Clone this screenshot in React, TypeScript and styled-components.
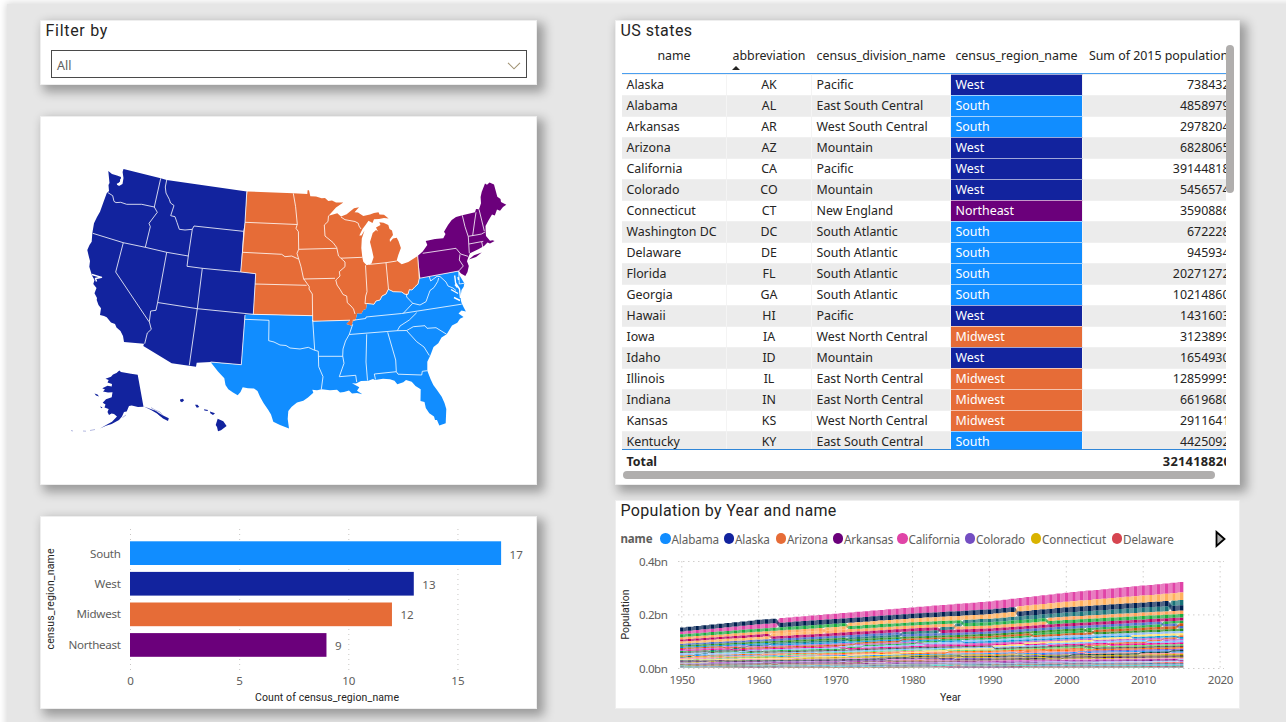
import React from "react";
import styled, { createGlobalStyle } from "styled-components";

const SANS = '"Noto Sans", "Open Sans", sans-serif';
const DIN = 'Roboto, "Liberation Sans", sans-serif';

const REGION = {
  South: "#118DFF",
  West: "#12239E",
  Midwest: "#E66C37",
  Northeast: "#6B007B",
} as const;
type Region = keyof typeof REGION;

const GlobalStyle = createGlobalStyle`
  * { box-sizing: border-box; }
  body { margin: 0; background: #fff; font-family: ${SANS}; color: #252423; overflow: hidden; }
`;

const Page = styled.div`
  width: 1286px;
  height: 722px;
  padding: 4px 0 0 7px;
  overflow: hidden;
`;

const Canvas = styled.main`
  height: 730px;
  width: 1290px;
  padding: 16px 0 0 33px;
  display: flex;
  gap: 78px;
  background: #e6e6e6;
  box-shadow: 0 0 7px 1px rgba(0, 0, 0, 0.16);
`;

const Column = styled.div<{ $width: number }>`
  width: ${(p) => p.$width}px;
  display: flex;
  flex-direction: column;
`;

const Card = styled.section<{ $height: number; $gap?: number; $flat?: boolean }>`
  height: ${(p) => p.$height}px;
  margin-bottom: ${(p) => p.$gap ?? 0}px;
  flex: none;
  background: #fff;
  border: 1px solid #eee;
  overflow: hidden;
  box-shadow: ${(p) => (p.$flat ? "none" : "5px 5px 10px 2px rgba(0, 0, 0, 0.33)")};
`;

const Title = styled.h2<{ $spacing: number }>`
  margin: 0;
  padding-left: 4.5px;
  height: 21px;
  font: 400 16px/20px ${DIN};
  letter-spacing: ${(p) => p.$spacing}px;
  white-space: nowrap;
`;

const Select = styled.div`
  margin: 8px 9px 0 10px;
  height: 28px;
  padding: 3px 5px 0;
  border: 1px solid #4a4a4a;
  display: flex;
  justify-content: space-between;
  align-items: center;
  font-size: 12.5px;
  color: #605e5c;
`;

const Fill = styled.svg`
  display: block;
  margin: -1px;
`;

/* ---------- table ---------- */

const TableArea = styled.div`
  display: flex;
  padding: 3px 0 0 6px;
`;

const TableView = styled.div`
  width: 604px;
  height: 427px;
  overflow: hidden;
  font-size: 12.4px;
`;

const columns = "105px 85px 139px 132px 152px";

const HeadRow = styled.div`
  display: grid;
  grid-template-columns: ${columns};
  width: 613px;
  height: 29px;
  border-bottom: 1px solid #4a9ff0;
`;

const HeadCell = styled.div`
  padding-right: 1px;
  text-align: center;
  line-height: 22px;
  white-space: nowrap;
`;

const SortMark = styled.div`
  width: 0;
  margin: -1px 0 0 5px;
  border: 4px solid transparent;
  border-top: 0;
  border-bottom-color: #252423;
`;

const Body = styled.div`
  height: 375px;
  overflow: hidden;
`;

const Row = styled.div<{ $odd: boolean }>`
  display: grid;
  grid-template-columns: ${columns};
  width: 613px;
  height: 21px;
  background: ${(p) => (p.$odd ? "#ececec" : "#fff")};
`;

const Cell = styled.div<{ $align?: string; $fill?: string }>`
  padding: 0 4.5px;
  line-height: 20px;
  text-align: ${(p) => p.$align ?? "left"};
  white-space: nowrap;
  color: ${(p) => (p.$fill ? "#fff" : "inherit")};
  background: ${(p) => p.$fill ?? "transparent"};
  border-right: 1px solid #f4f4f4;
  border-top: 1px solid ${(p) => (p.$fill ? "rgba(255,255,255,.6)" : "#f0f0f0")};
`;

const TotalRow = styled.div`
  width: 613px;
  height: 23px;
  display: flex;
  justify-content: space-between;
  padding: 0 4px 0 4.5px;
  border-top: 1px solid #2f86d8;
  font-weight: 700;
  line-height: 23px;
`;

const TotalValue = styled.span`
  font-size: 12.8px;
  letter-spacing: 0.25px;
`;

const VScroll = styled.div`
  width: 8px;
  height: 148px;
  border-radius: 4px;
  background: #b0aead;
`;

const HScroll = styled.div`
  width: 592px;
  height: 8px;
  margin-left: 7px;
  margin-top: -1px;
  border-radius: 4px;
  background: #b0aead;
`;

const states: [string, string, string, Region, string][] = [
  ["Alaska", "AK", "Pacific", "West", "738432"],
  ["Alabama", "AL", "East South Central", "South", "4858979"],
  ["Arkansas", "AR", "West South Central", "South", "2978204"],
  ["Arizona", "AZ", "Mountain", "West", "6828065"],
  ["California", "CA", "Pacific", "West", "39144818"],
  ["Colorado", "CO", "Mountain", "West", "5456574"],
  ["Connecticut", "CT", "New England", "Northeast", "3590886"],
  ["Washington DC", "DC", "South Atlantic", "South", "672228"],
  ["Delaware", "DE", "South Atlantic", "South", "945934"],
  ["Florida", "FL", "South Atlantic", "South", "20271272"],
  ["Georgia", "GA", "South Atlantic", "South", "10214860"],
  ["Hawaii", "HI", "Pacific", "West", "1431603"],
  ["Iowa", "IA", "West North Central", "Midwest", "3123899"],
  ["Idaho", "ID", "Mountain", "West", "1654930"],
  ["Illinois", "IL", "East North Central", "Midwest", "12859995"],
  ["Indiana", "IN", "East North Central", "Midwest", "6619680"],
  ["Kansas", "KS", "West North Central", "Midwest", "2911641"],
  ["Kentucky", "KY", "East South Central", "South", "4425092"],
];

function StatesTable() {
  return (
    <>
      <TableArea>
        <TableView>
          <HeadRow>
            <HeadCell>name</HeadCell>
            <HeadCell>
              abbreviation
              <SortMark />
            </HeadCell>
            <HeadCell>census_division_name</HeadCell>
            <HeadCell>census_region_name</HeadCell>
            <HeadCell>Sum of 2015 population</HeadCell>
          </HeadRow>
          <Body>
            {states.map(([name, abbr, division, region, pop], i) => (
              <Row key={abbr} $odd={i % 2 === 1}>
                <Cell>{name}</Cell>
                <Cell $align="center">{abbr}</Cell>
                <Cell>{division}</Cell>
                <Cell $fill={REGION[region]}>{region}</Cell>
                <Cell $align="right">{pop}</Cell>
              </Row>
            ))}
          </Body>
          <TotalRow>
            <span>Total</span>
            <TotalValue>321418820</TotalValue>
          </TotalRow>
        </TableView>
        <VScroll />
      </TableArea>
      <HScroll />
    </>
  );
}

/* ---------- map ---------- */

const WEST =
  "M108.3 171L112 174L117 175.5L121 177L120.5 181L117 184.5L119 186L122.5 184L123.5 178L122.6 172L123.5 169L160.7 178.3L166.7 180L246.8 191.4L245 222.3L243.3 231.3L242 252.3L240.7 272L255.7 273.7L253.3 314.3L245 314.5L241.3 364.7L210.7 362L196.7 362.7L196 366.7L171.7 363.3L143.3 346L144 343.7L124 342L123 336L120.5 331L116.5 327.5L115 324L111 322.5L106.7 317.3L104 316L100 315L101 308.3L98.5 305L96.7 300L97 298L94.5 293.3L96.5 288L93.3 284L94.5 280L92 275.5L89.3 266.7L90 261L88.7 256L87.3 250L89.5 245L91.7 241.7L92.3 233.3L94 223.3L97 217L100 211.7L103.5 202L106.7 193.3L109 191L108.5 185L109.5 183Z";
const ALASKA =
  "M119.3 370.6L121 372L126.7 373L131 373.8L137.7 374.7L143.5 406.7L138 407L131.7 405.5L129 406L126.7 411.5L124 412L122 416.5L119 420L111.7 424L106 425.8L100 428.5L107 424.4L112 421.8L117 416.5L114 414L111.5 413.5L109 415L107.5 412L108.7 409L104.5 407.5L105.5 404.5L102.7 402.7L106 399.3L111.7 397.3L112.5 392.3L108 392.5L103 391.5L105 389.5L102.3 388.2L107.5 385.8L111.7 386.5L112 384L107.5 382.5L108.7 380L105.5 378.7L111 376.8L113 374.6L116.5 373Z M144 406.5L150 408.8L156 411L162 415L168.8 418.3L168 421L163 418.5L157 413.5L151 410Z M94.5 393.5l3 1l1.5 2l-3 -1z M100 406.5l2.5 .7l-1 1z";
const HAWAII =
  "M180 399.5L183 398.8L184 400.5L182 402.2L180.2 401.2Z M195 404.7L197.5 404.8L199.3 407L196.8 407.8Z M204 409.2L208 410L207.5 411L204.4 410.4Z M210 411.5L215 413.2L213 415L210.3 413.2Z M217.7 418.8L223.3 421.3L226.6 426L221 430.2L218 431.3L217 427L215.7 425Z";
const MIDWEST =
  "M247.3 191.4L293.3 193.3L307.3 194L307.6 190.3L309 190.3L310.3 196.3L316 196.5L321.7 198.3L325 198L328.3 201L332 200.5L336 202.4L343.3 202.4L336 207.5L328.6 215.7L333 214.5L337.3 213.2L341 216.6L346.7 214.3L350 211.5L354 208.2L359 207.3L354.5 212.3L358 212.5L363.3 216L370 214.4L374 213L378.5 212.3L379.5 214.6L384 214.7L388.6 218.4L384 218L379 219L374 219.3L372.5 223L368.5 220.8L365.5 225L362.5 229L359.3 235.5L361.5 235.5L364.5 230.5L361.8 238.5L361.3 248L362.3 257.3L363.3 261.7L366.7 265.3L371.5 263.5L373.6 257.3L372 250L370 242L372.7 233L376 230L378 231.5L376 227.5L380.5 225L379.3 222.3L383.5 222.8L388.3 225L389.5 229L392 230.5L393 235L389.7 239.5L390 242L393 238.5L396.7 237.7L398.5 241L400.9 248L398.3 255L396.7 260.5L401.7 264.3L408.3 261.9L417.7 256L419.3 270L419.3 278.3L418 284L415 286.7L412 290L409.3 289.7L408 294.3L405 294.3L401.7 292L393.3 291.7L388.3 289.3L386 294L382 296L380 300L376 301L374 304.3L367 303.5L366 309L363.3 310L361.5 313.5L357.3 313.3L355.5 320L352.6 321.5L351.7 325.7L346.5 324L350 320.2L312.7 321.3L312.7 315.7L253.3 314.3L255.7 273.7L240.7 272Z";
const NORTHEAST =
  "M481.7 192L485 183.5L487 184.8L489.5 182.6L494 184.6L497.3 196.7L500.5 199L501 202L506.3 204.7L503 207L500 210.7L497 209.5L494.8 215.6L492 214.5L488.3 220.7L485.5 226L485.7 231.7L486 236L490 240.7L492.5 240.3L494.6 241L490 243.6L487.5 242.5L484 246L478.3 249.2L470 253.3L468.4 257L467 261.3L468.8 266L467.5 272L465.3 276L461 273.5L458.8 271L420.3 278.3L417.7 256L422.7 251.5L427.3 245L425.7 241L435 239L443.3 238.3L445.5 234L444 231.7L448 225L451.7 220L456 217L462.3 215.3L475 212.3L476 209L479 209.3L481 203.3L480.6 197Z M468.8 259.6L474 255.2L481.7 252.5L476 257Z";
const SOUTH =
  "M245 314.3L253.3 314.5L312.7 315.7L312.7 321.3L350 320.2L346.5 324L351.7 325.7L352.6 321.5L355.5 320L357.3 313.3L361.5 313.5L363.3 310L366 309L367 303.5L374 304.3L376 301L380 300L382 296L386 294L388.3 289.3L393.3 291.7L401.7 292L405 294.3L408 294.3L409.3 289.7L412 290L415 286.7L418 284L419.3 278.3L458.7 271.3L459.3 275L464.3 283.3L463.7 286.7L461.5 290L460.5 297L461 301L461.7 303.3L463.5 307L465.9 311.5L461.5 310.5L458.5 313.5L463.5 317L460 318.7L457.3 322.8L452 325.5L446.7 334.3L441.5 337.5L438.3 343.3L433.5 347L430.5 355L427.3 361.7L427.3 370.7L430.5 379L433.3 385L437 390L441.7 396.7L444.5 403L446.3 409L445.7 423.3L439.3 425.5L437 420L435 420L434 416.5L429.3 413.3L425.8 408L424.5 402L420.5 401L420.7 389.3L415.5 386L411.7 381.7L406 380L403.3 382.2L397.3 384.2L394.5 380.7L390 379.3L383 378.7L375 380L373 379L368.3 380.7L361 381L356 383.5L352 383.3L359.3 387.3L357 390.7L362.3 394.3L357 393L352 393.6L349 390.5L344 391.9L340 392.5L337 389.7L330 390.2L321.7 389.3L317 390.3L312.3 389.7L313.3 392.7L308 397.5L303.3 400.7L297 402.5L291.7 406.7L288.3 411L287.7 419L289 428.6L280 425L273.3 421.7L271 414.5L268.3 410L263.5 403L260 396.7L257.5 391L254 388.5L248 388.3L242.7 387.3L240.5 392L237.7 395.3L233 392.5L228.3 389.3L225.5 385L224.3 378.3L218 371.5L210.7 362.3L241.3 364.7Z";

const BORDERS = [
  "M108 192.7L112.7 195.7L114 201.4L116 202.6L120.7 202.3L126.7 204.3L141.7 204.3L154.3 207",
  "M160.7 178.3L154.3 207L157.3 212.3L149 223.3L150.3 226.7L145.3 247.3",
  "M92.7 233.3L123.3 242.7L145.3 247.3L166.7 252.3L188.3 256",
  "M166.7 180L165.3 187L166 193L169.3 199.3L170.5 203L174 205.5L170.7 215.7L175 216.7L177 222.5L179.3 229.3L185 230L192.3 229.3L194 226L243.3 231.3",
  "M192.3 229.3L188.3 256L187 266.3L202.3 268.3L240.7 272L255.7 273.7L253.3 314.3",
  "M123.3 242.7L115.7 272L149 321.7",
  "M166.7 252.3L157.6 302.5L156 310.3L150.7 311L149.3 321.7L151.3 329.3L147.3 333L144.7 343.7",
  "M157.6 302.5L197.3 308.7L253.3 314.3L312.7 315.7",
  "M202.3 268.3L197.3 308.7L189.3 365.3",
  "M246.8 191.4L245 222.3L240.7 272",
  "M245 222.3L297.3 224.5",
  "M293.3 193.3L295.6 206.7L297.3 224.3L296 228.3L298.4 231.7L298.7 249.3L336.7 248.3",
  "M242.7 252.3L281.7 254.3L285 256.7L291.7 256L298.3 259",
  "M298.7 249.3L297 253.3L301 266.7L303.5 278.5L309.3 286.7L309 289L312.3 294L312.7 321.3",
  "M255 284L306.7 285.3M303.3 279L335 278.3",
  "M328.5 215.7L328 221.5L324.3 225L325 236L333 242.5L336.7 247.5L338.5 256L345 262L345 266.7L339.3 271.7L340 276L335.8 280L337 285L340 289.3L343 294.5L346.7 296L347.3 302.7L351 306L353.5 309L355 314",
  "M341 258.2L362.3 257.3M341 217L345 219.7L355 221.5L358.3 223.3L359 226L361 229",
  "M365.5 265.3L367 291.7L365.7 296L365 303.7M386 262.7L388.5 289.3M368.5 264.5L386 262.7L396.7 261",
  "M462.3 215.3L465 226.7L468.3 236.7L469.3 253.3M476 212.3L474.7 221L472.7 235.5M479 209.3L484.3 231",
  "M468.3 236.3L478 234.7L481.5 234L485 232M469 244L483.3 241.3M481.7 242L482.8 247.3",
  "M422.7 253.3L456 248.3L460.7 254L468 256.3M460 254.3L459.3 260L463.3 266L458.7 271",
  "M417.7 256L419.3 278.3L458.7 271L459.3 284L464 283.3",
  "M210.7 362L241.3 364.7L245 315M245 319.3L269 320.3L268.7 340.7L274 342L280 345L286 345.5L290 348L300 349L308.3 347.3L314 350L318.3 351.3",
  "M312.7 320L314.7 350M318.3 351.3L318.7 366.7L323 376.7L321.3 389.3M318.7 356.3L342.7 356.3M312.7 321.3L350 320.2",
  "M352.7 324.3L349.3 334.3L345.5 341L343 349L342.7 356L344 363.3L339.3 376.7L355.7 375.3L356.7 382",
  "M349.3 334.5L397.3 330.7L406.7 330.5L413.3 326.7L425 325.7L427 328.3L436 327.7L446.7 334.3",
  "M366.7 334.3L366 362L367.5 380.5M387.7 332.3L395.7 360L396.3 371.7L374.3 374L375.5 379.5M396.3 371.7L398 374.2L421.7 375L422.3 371.3L427.3 370.7",
  "M406.7 330.7L416.7 341.7L424 347L429.3 355.5M352.7 320.3L365.7 318.5L366 317L401.7 313.5L461.7 304.2",
  "M416.7 312.7L409.3 320L400 326L397.3 330.7M403.3 313.3L412.7 303.3L406.7 297L406.5 294",
  "M412.7 303.3L420 305L426 301.7L430 290.5L434 287.5L437.7 281.5L438.7 278M429.3 276.7L430.7 281L437 276.3L440 276.5L446 282L448 286L453 288L456 290.5",
  "M365 303.7L367 303.5L374 304.3L376 301L380 300L382 296L386 294L388.3 289.3L393.3 291.7L401.7 292L405 294.3L408 294.3L409.3 289.7L412 290L415 286.7L418 284L419.3 278.3",
].join("");

const WATER =
  "M92 274.5L101.5 277.3L95.5 278.5L96.5 281.5M117 184.5L120.5 183L121 179M454.7 275.5L455.6 283L459.5 289L460.5 298M455 284.5L457.5 287.5M451 289.5L458 293.5M454 297.5L460 300.5M458 277L458.6 280";

function UsMap() {
  return (
    <Fill width={497} height={369} viewBox="40 116 497 369">
      <path d={SOUTH} fill={REGION.South} />
      <path d={MIDWEST} fill={REGION.Midwest} />
      <path d={NORTHEAST} fill={REGION.Northeast} />
      <path d={WEST} fill={REGION.West} />
      <path d={ALASKA} fill={REGION.West} />
      <path d={HAWAII} fill={REGION.West} />
      <path
        d="M122.5 417.5l3.5 -2.5M90 430.5l5 -1M83 431l3 .2M71 430.5l2 .5M151 407.5l4 2.5l5 2l4 5l4 3M154 410l5 5l5 3"
        fill="none"
        stroke={REGION.West}
        strokeOpacity={0.4}
        strokeWidth={0.8}
      />
      <path d={BORDERS} fill="none" stroke="#fff" strokeOpacity={0.85} strokeWidth={0.95} strokeLinejoin="round" />
      <path d={WATER} fill="none" stroke="#fff" strokeWidth={1.4} strokeLinejoin="round" />
    </Fill>
  );
}

/* ---------- bar chart ---------- */

const counts: [Region, number, number][] = [
  ["South", 17, 31],
  ["West", 13, 26.5],
  ["Midwest", 12, 44.5],
  ["Northeast", 9, 52.5],
];

const Tick = styled.text`
  font-family: ${SANS};
  font-size: 11.6px;
  fill: #605e5c;
`;

const AxisTitle = styled.text`
  font-family: ${DIN};
  font-size: 10.5px;
  fill: #252423;
  text-anchor: middle;
`;

function RegionBars() {
  const unit = 21.83;
  return (
    <Fill width={497} height={193} viewBox="0 0 497 193">
      {[0, 5, 10, 15].map((v) => (
        <g key={v}>
          <line
            x1={90.5 + v * unit}
            x2={90.5 + v * unit}
            y1={13}
            y2={156}
            stroke="#c8c6c4"
            strokeDasharray="1 4"
          />
          <Tick x={90.5 + v * unit} y={168.5} textAnchor="middle">
            {v}
          </Tick>
        </g>
      ))}
      {counts.map(([region, n, width], i) => (
        <g key={region}>
          <rect x={90} y={25.3 + i * 30.6} width={n * unit} height={23.7} fill={REGION[region]} />
          <Tick x={81} y={41.5 + i * 30.4} textAnchor="end" textLength={width}>
            {region}
          </Tick>
          <Tick x={98.5 + n * unit} y={42.5 + i * 30.4}>
            {n}
          </Tick>
        </g>
      ))}
      <AxisTitle x={287} y={184.5} textLength={144}>
        Count of census_region_name
      </AxisTitle>
      <AxisTitle transform="translate(14 83) rotate(-90)" textLength={101}>
        census_region_name
      </AxisTitle>
    </Fill>
  );
}

/* ---------- ribbon chart ---------- */

const KNOTS = [1950, 1960, 1970, 1980, 1990, 2000, 2015];

// State populations in millions at each knot year.
const population: [string, number[]][] = [
  ["#118DFF", [3.06, 3.27, 3.44, 3.89, 4.04, 4.45, 4.86]],
  ["#12239E", [0.13, 0.23, 0.3, 0.4, 0.55, 0.63, 0.74]],
  ["#E66C37", [0.75, 1.3, 1.77, 2.72, 3.67, 5.13, 6.83]],
  ["#6B007B", [1.91, 1.79, 1.92, 2.29, 2.35, 2.67, 2.98]],
  ["#E044A7", [10.59, 16.3, 19.95, 23.67, 29.76, 33.87, 39.14]],
  ["#744EC2", [1.33, 1.75, 2.21, 2.89, 3.29, 4.3, 5.46]],
  ["#D9B300", [2.01, 2.54, 3.03, 3.11, 3.29, 3.41, 3.59]],
  ["#D64550", [0.32, 0.45, 0.55, 0.59, 0.67, 0.78, 0.95]],
  ["#197278", [2.77, 4.95, 6.79, 9.75, 12.94, 15.98, 20.1]],
  ["#1AAB40", [3.44, 3.94, 4.59, 5.46, 6.48, 8.19, 10.21]],
  ["#15C6F4", [0.5, 0.63, 0.77, 0.96, 1.11, 1.21, 1.43]],
  ["#4092FF", [0.59, 0.67, 0.71, 0.94, 1.01, 1.29, 1.65]],
  ["#FFA058", [8.71, 10.08, 11.11, 11.43, 11.43, 12.42, 12.86]],
  ["#BE5DC9", [3.93, 4.66, 5.19, 5.49, 5.54, 6.08, 6.62]],
  ["#F472D0", [2.62, 2.76, 2.82, 2.91, 2.78, 2.93, 3.12]],
  ["#B5A1FF", [1.91, 2.18, 2.25, 2.36, 2.48, 2.69, 2.91]],
  ["#C4A200", [2.94, 3.04, 3.22, 3.66, 3.69, 4.04, 4.43]],
  ["#FF8080", [2.68, 3.26, 3.64, 4.21, 4.22, 4.47, 4.67]],
  ["#00DBBC", [0.91, 0.97, 0.99, 1.12, 1.23, 1.27, 1.33]],
  ["#5BD667", [2.34, 3.1, 3.92, 4.22, 4.78, 5.3, 6.01]],
  ["#0091D5", [4.69, 5.15, 5.69, 5.74, 6.02, 6.35, 6.79]],
  ["#4668C5", [6.37, 7.82, 8.88, 9.26, 9.3, 9.94, 9.92]],
  ["#FF6300", [2.98, 3.41, 3.8, 4.08, 4.38, 4.92, 5.49]],
  ["#99008A", [2.18, 2.18, 2.22, 2.52, 2.57, 2.84, 2.99]],
  ["#EC008C", [3.95, 4.32, 4.68, 4.92, 5.12, 5.6, 6.08]],
  ["#533285", [0.59, 0.67, 0.69, 0.79, 0.8, 0.9, 1.03]],
  ["#99700A", [1.33, 1.41, 1.48, 1.57, 1.58, 1.71, 1.9]],
  ["#FF4141", [0.16, 0.29, 0.49, 0.8, 1.2, 2.0, 2.89]],
  ["#1F9A85", [0.53, 0.61, 0.74, 0.92, 1.11, 1.24, 1.33]],
  ["#25891C", [4.84, 6.07, 7.17, 7.37, 7.73, 8.41, 8.96]],
  ["#0057A2", [0.68, 0.95, 1.02, 1.3, 1.52, 1.82, 2.09]],
  ["#002050", [14.83, 16.78, 18.24, 17.56, 17.99, 18.98, 19.8]],
  ["#C94F0F", [4.06, 4.56, 5.08, 5.88, 6.63, 8.05, 10.04]],
  ["#450F54", [0.62, 0.63, 0.62, 0.65, 0.64, 0.64, 0.76]],
  ["#B60064", [7.95, 9.71, 10.65, 10.8, 10.85, 11.35, 11.61]],
  ["#34124F", [2.23, 2.33, 2.56, 3.03, 3.15, 3.45, 3.91]],
  ["#6A5A29", [1.52, 1.77, 2.09, 2.63, 2.84, 3.42, 4.03]],
  ["#1AAB40", [10.5, 11.32, 11.79, 11.86, 11.88, 12.28, 12.8]],
  ["#BA141A", [0.79, 0.86, 0.95, 0.95, 1.0, 1.05, 1.06]],
  ["#0C3D37", [2.12, 2.38, 2.59, 3.12, 3.49, 4.01, 4.9]],
  ["#0B511F", [0.65, 0.68, 0.67, 0.69, 0.7, 0.75, 0.86]],
  ["#70BBFF", [3.29, 3.57, 3.93, 4.59, 4.88, 5.69, 6.6]],
  ["#FFB15E", [7.71, 9.58, 11.2, 14.23, 16.99, 20.85, 27.47]],
  ["#8AD4EB", [0.69, 0.89, 1.06, 1.46, 1.72, 2.23, 3.0]],
  ["#A66999", [0.38, 0.39, 0.44, 0.51, 0.56, 0.61, 0.63]],
  ["#83B8F8", [3.32, 3.97, 4.65, 5.35, 6.19, 7.08, 8.38]],
  ["#FFE066", [2.38, 2.85, 3.41, 4.13, 4.87, 5.89, 7.17]],
  ["#4AC5BB", [0.8, 0.76, 0.76, 0.64, 0.61, 0.57, 0.67]],
  ["#7F7FBF", [2.01, 1.86, 1.74, 1.95, 1.79, 1.81, 1.84]],
  ["#4F4F4F", [3.43, 3.95, 4.42, 4.71, 4.89, 5.36, 5.77]],
  ["#F5C869", [0.29, 0.33, 0.33, 0.47, 0.45, 0.49, 0.59]],
];

function interpolate(values: number[], year: number) {
  let k = 0;
  while (k < KNOTS.length - 2 && year > KNOTS[k + 1]) k++;
  const t = (year - KNOTS[k]) / (KNOTS[k + 1] - KNOTS[k]);
  return values[k] + (values[k + 1] - values[k]) * t;
}

const STEP = 7.69;
const X0 = 65.8;
const BASE = 114;
const BAR = 1.7;

// Each year is a stack sorted by size; ribbons join a state's slots in neighbouring years.
function ribbonPaths() {
  const out = population.map(([color]) => ({ color, bars: "", ribbons: "" }));
  let previous: { top: number; bottom: number }[] | null = null;
  for (let year = 1950; year <= 2015; year++) {
    const sizes = population.map(([, v], i) => ({ i, h: interpolate(v, year) * 0.2675 }));
    sizes.sort((a, b) => a.h - b.h);
    const slots: { top: number; bottom: number }[] = [];
    let y = BASE;
    for (const s of sizes) {
      slots[s.i] = { top: y - s.h, bottom: y };
      y -= s.h;
    }
    const x = X0 + (year - 1950) * STEP;
    const left = x - BAR;
    const right = x + BAR;
    slots.forEach((s, i) => {
      out[i].bars += `M${left.toFixed(2)} ${s.top.toFixed(2)}H${right.toFixed(2)}V${s.bottom.toFixed(2)}H${left.toFixed(2)}Z`;
      if (previous) {
        const p = previous[i];
        const from = right - STEP;
        const mid = (from + left) / 2;
        out[i].ribbons +=
          `M${from.toFixed(2)} ${p.top.toFixed(2)}C${mid.toFixed(2)} ${p.top.toFixed(2)} ${mid.toFixed(2)} ${s.top.toFixed(2)} ${left.toFixed(2)} ${s.top.toFixed(2)}` +
          `V${s.bottom.toFixed(2)}C${mid.toFixed(2)} ${s.bottom.toFixed(2)} ${mid.toFixed(2)} ${p.bottom.toFixed(2)} ${from.toFixed(2)} ${p.bottom.toFixed(2)}Z`;
      }
    });
    previous = slots;
  }
  return out;
}

const ribbons = ribbonPaths();

const legend = [
  ["Alabama", "#118DFF", 63.5],
  ["Alaska", "#12239E", 52],
  ["Arizona", "#E66C37", 57],
  ["Arkansas", "#6B007B", 64.5],
  ["California", "#E044A7", 67.5],
  ["Colorado", "#744EC2", 66],
  ["Connecticut", "#D9B300", 81],
  ["Delaware", "#D64550", 65],
] as const;

const Legend = styled.div`
  height: 32px;
  padding: 1px 13px 0 4.5px;
  display: flex;
  align-items: center;
  font-size: 11.7px;
  letter-spacing: -0.12px;
  color: #605e5c;
`;

const LegendName = styled.b`
  width: 39.5px;
  font-size: 11.5px;
`;

const LegendItem = styled.span<{ $width: number }>`
  width: ${(p) => p.$width}px;
  display: flex;
  align-items: center;
  gap: 1px;
  white-space: nowrap;
`;

const Dot = styled.i<{ $color: string }>`
  width: 10.5px;
  height: 10.5px;
  flex: none;
  border-radius: 50%;
  background: ${(p) => p.$color};
`;

const NextArrow = styled.svg`
  margin-left: auto;
`;

const RibbonSvg = styled.svg`
  display: block;
`;

function PopulationRibbon() {
  return (
    <RibbonSvg width={623} height={154} viewBox="0 0 623 154">
      {[7.5, 60.9, BASE + 0.5].map((y, i) => (
        <g key={y}>
          <line x1={62} x2={608} y1={y} y2={y} stroke="#d0cecc" strokeDasharray="1.5 3.5" />
          <Tick x={52} y={y + 4} textAnchor="end" textLength={29}>
            {["0.4bn", "0.2bn", "0.0bn"][i]}
          </Tick>
        </g>
      ))}
      {[0, 1, 2, 3, 4, 5, 6, 7].map((d) => (
        <g key={d}>
          <line
            x1={X0 + d * STEP * 10}
            x2={X0 + d * STEP * 10}
            y1={7}
            y2={BASE}
            stroke="#d0cecc"
            strokeDasharray="1.5 3.5"
          />
          <Tick x={X0 + 0.5 + d * STEP * 10} y={129.6} textAnchor="middle" textLength={25.5}>
            {1950 + d * 10}
          </Tick>
        </g>
      ))}
      {ribbons.map((r, i) => (
        <path key={i} d={r.ribbons} fill={r.color} fillOpacity={0.7} />
      ))}
      {ribbons.map((r, i) => (
        <path key={i} d={r.bars} fill={r.color} />
      ))}
      <AxisTitle x={334.5} y={146.5}>
        Year
      </AxisTitle>
      <AxisTitle transform="translate(13 60.5) rotate(-90)" textLength={50}>
        Population
      </AxisTitle>
    </RibbonSvg>
  );
}

export default function App() {
  return (
    <Page>
      <GlobalStyle />
      <Canvas>
        <Column $width={497}>
          <Card $height={65} $gap={31}>
            <Title $spacing={0.7}>Filter by</Title>
            <Select>
              All
              <svg width="14" height="8" viewBox="0 0 14 8">
                <path d="M1 0.8L7 6.8L13 0.8" fill="none" stroke="#a19373" strokeWidth="1.1" />
              </svg>
            </Select>
          </Card>
          <Card $height={369} $gap={31}>
            <UsMap />
          </Card>
          <Card $height={193}>
            <RegionBars />
          </Card>
        </Column>
        <Column $width={625}>
          <Card $height={465} $gap={15}>
            <Title $spacing={0.45}>US states</Title>
            <StatesTable />
          </Card>
          <Card $height={209} $flat>
            <Title $spacing={0.33}>Population by Year and name</Title>
            <Legend>
              <LegendName>name</LegendName>
              {legend.map(([name, color, width]) => (
                <LegendItem key={name} $width={width}>
                  <Dot $color={color} />
                  {name}
                </LegendItem>
              ))}
              <NextArrow width="11" height="18" viewBox="0 0 11 18">
                <path d="M1.5 2L9.5 9L1.5 16Z" fill="#b3b3b3" stroke="#000" strokeWidth="1.8" />
              </NextArrow>
            </Legend>
            <PopulationRibbon />
          </Card>
        </Column>
      </Canvas>
    </Page>
  );
}
